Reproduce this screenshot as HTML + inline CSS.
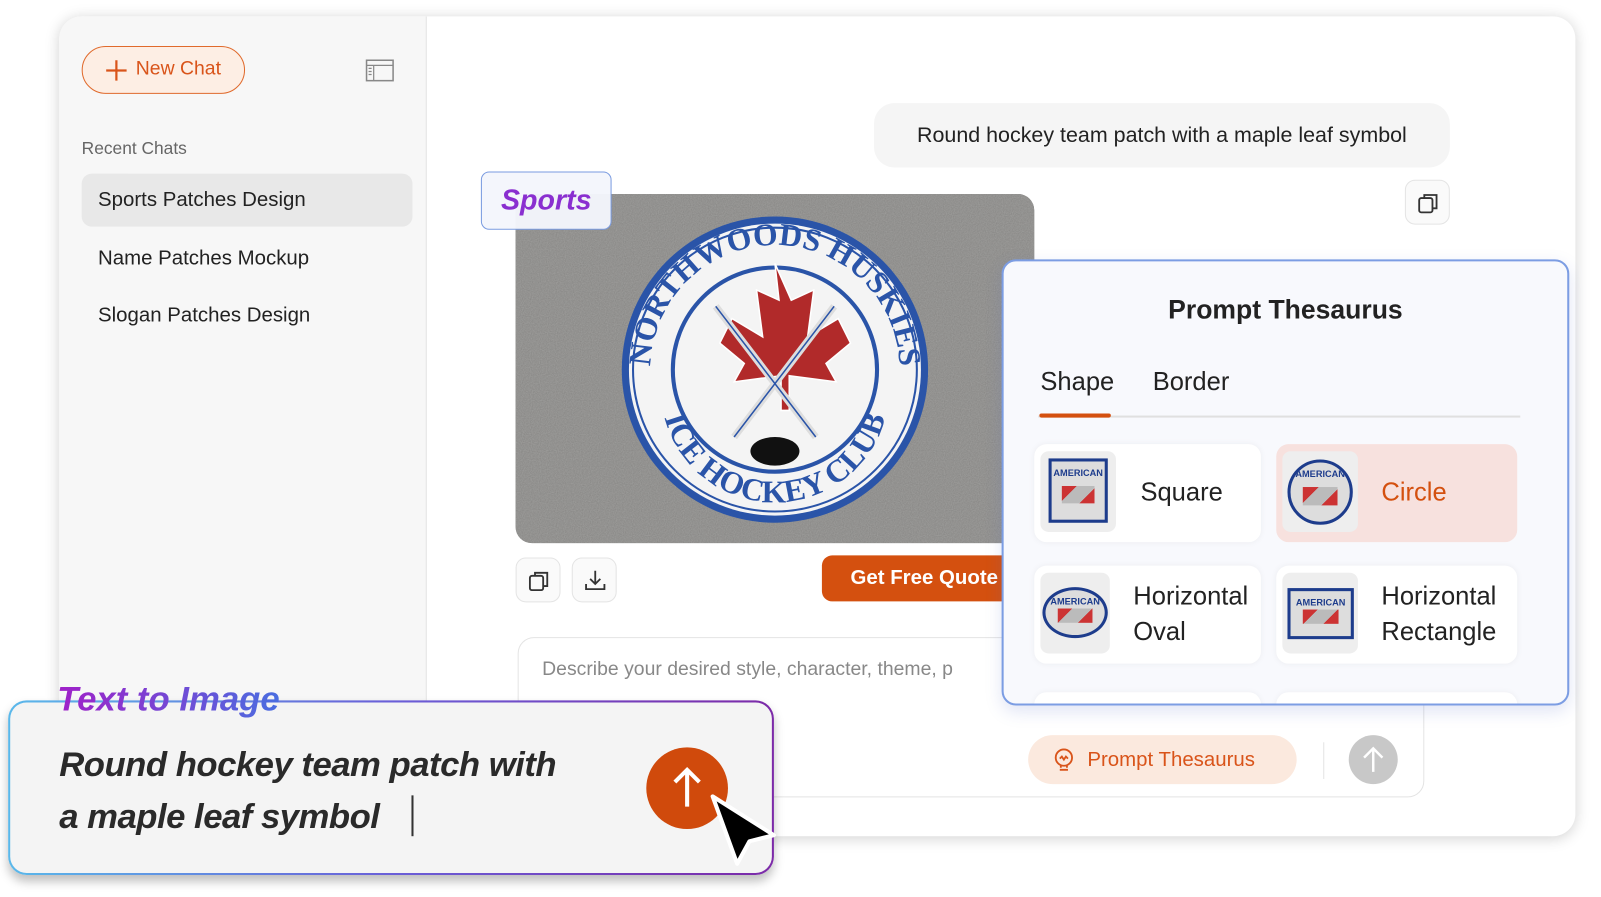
<!DOCTYPE html>
<html><head><meta charset="utf-8"><style>
*{box-sizing:border-box;margin:0;padding:0}
body{width:1601px;height:897px;background:#fff;position:relative;overflow:hidden;font-family:"Liberation Sans",sans-serif;color:#222}
#w{position:absolute;left:0;top:0;width:1568px;height:879px;transform:scale(1.021);transform-origin:0 0}
.abs{position:absolute}
.card{left:58px;top:16px;width:1485px;height:803px;border-radius:22px;background:#fff;box-shadow:0 2px 14px rgba(0,0,0,.18);overflow:hidden}
.side{left:0;top:0;width:360px;height:803px;background:#f7f7f7;border-right:1px solid #e4e4e4}
.nc{left:22px;top:29px;width:160px;height:47px;border:1.5px solid #e06a2c;border-radius:24px;background:#fdeee4;color:#d9541a;font-size:19px;line-height:44px;padding-left:52px}
.item{left:22px;width:324px;height:52px;border-radius:10px;font-size:20px;line-height:52px;padding-left:16px;color:#222}
.btn{width:44px;height:44px;border:1px solid #e4e4e4;border-radius:10px;background:#fafafa}
.th{border-radius:12px;background:#fff;box-shadow:0 0 6px rgba(0,0,0,.05)}
.thimg{border-radius:8px;background:#eeeeee}
.lab{font-size:25px;color:#222;line-height:35px}
.pt{background:#ddd;overflow:hidden}
.pt::before{content:"AMERICAN";position:absolute;left:0;right:0;top:6px;text-align:center;font-size:9px;font-weight:bold;color:#1d3c8c}
.pt::after{content:"";position:absolute;left:20%;right:20%;top:42%;height:30%;background:linear-gradient(135deg,#c33 0 30%,#bbb 30% 70%,#c33 70%)}
</style></head><body><div id="w">
<div class="abs card">
 <div class="abs side">
  <div class="abs nc"><svg class="abs" style="left:22px;top:12px" width="22" height="22" viewBox="0 0 22 22"><path d="M11 1v20M1 11h20" stroke="#d9541a" stroke-width="2.2"/></svg>New Chat</div>
  <svg class="abs" style="left:300px;top:42px" width="28" height="22" viewBox="0 0 28 22"><rect x="1" y="1" width="26" height="20" fill="none" stroke="#888" stroke-width="1.5"/><path d="M1 6h26M8 6v15M3 9h3M3 12h3M3 15h3" stroke="#888" stroke-width="1.2"/></svg>
  <div class="abs" style="left:22px;top:120px;font-size:17px;color:#666">Recent Chats</div>
  <div class="abs item" style="top:154px;background:#e8e8e8">Sports Patches Design</div>
  <div class="abs item" style="top:211px">Name Patches Mockup</div>
  <div class="abs item" style="top:267px">Slogan Patches Design</div>
 </div>
 <div class="abs" style="left:798px;top:85px;width:564px;height:63px;border-radius:20px;background:#f5f5f5;font-size:21px;line-height:63px;text-align:center;color:#222">Round hockey team patch with a maple leaf symbol</div>
 <div class="abs btn" style="left:1318px;top:160px"><svg class="abs" style="left:11px;top:11px" width="22" height="22" viewBox="0 0 22 22" fill="none" stroke="#333" stroke-width="1.8"><rect x="2" y="6" width="13" height="14" rx="2"/><path d="M7 6V3h12v13h-4"/></svg></div>
 <div class="abs" style="left:447px;top:174px;width:508px;height:342px;border-radius:16px;background:#7d7c7a;overflow:hidden">
  <svg width="508" height="342" viewBox="0 0 508 342">
   <defs><filter id="n"><feTurbulence type="fractalNoise" baseFrequency=".9" numOctaves="2"/><feColorMatrix values="0 0 0 0 .45 0 0 0 0 .45 0 0 0 0 .44 0 0 0 .6 0"/></filter>
   <path id="top" d="M132 172a122 122 0 0 1 244 0"/><path id="bot" d="M142 190a112 112 0 0 0 224 0"/></defs>
   <rect width="508" height="342" fill="#858482"/><rect width="508" height="342" filter="url(#n)"/>
   <circle cx="254" cy="172" r="150" fill="#2a54a8"/>
   <circle cx="254" cy="172" r="143" fill="#f4f4f4"/>
   <circle cx="254" cy="172" r="139" fill="none" stroke="#2a54a8" stroke-width="2"/>
   <circle cx="254" cy="172" r="100" fill="none" stroke="#2a54a8" stroke-width="4"/>
   <path d="M254 68l16 36 22-10-6 46 30-18 12 24-24 20 10 18-46-6v34h-8v-34l-46 6 10-18-24-20 12-24 30 18-6-46 22 10z" fill="#b12a2a" stroke="#fff" stroke-width="1.5"/>
   <path d="M196 110l98 128M312 110l-98 128" stroke="#ddd" stroke-width="7"/>
   <path d="M196 110l98 128M312 110l-98 128" stroke="#2a54a8" stroke-width="1.5"/>
   <ellipse cx="254" cy="252" rx="24" ry="14" fill="#111"/>
   <text font-family="Liberation Serif" font-weight="bold" font-size="31" fill="#2a54a8"><textPath href="#top" startOffset="50%" text-anchor="middle">NORTHWOODS HUSKIES</textPath></text>
   <text font-family="Liberation Serif" font-weight="bold" font-size="31" fill="#2a54a8"><textPath href="#bot" startOffset="50%" text-anchor="middle">ICE HOCKEY CLUB</textPath></text>
  </svg>
 </div>
 <div class="abs btn" style="left:447px;top:530px"><svg class="abs" style="left:11px;top:11px" width="22" height="22" viewBox="0 0 22 22" fill="none" stroke="#333" stroke-width="1.8"><rect x="2" y="6" width="13" height="14" rx="2"/><path d="M7 6V3h12v13h-4"/></svg></div>
 <div class="abs btn" style="left:502px;top:530px"><svg class="abs" style="left:11px;top:10px" width="22" height="22" viewBox="0 0 22 22" fill="none" stroke="#333" stroke-width="1.8"><path d="M11 2v13M6 10l5 5 5-5M2 15v5h18v-5"/></svg></div>
 <div class="abs" style="left:747px;top:528px;width:200px;height:45px;border-radius:10px;background:#d4500f;color:#fff;font-size:20px;font-weight:bold;line-height:45px;padding-left:28px">Get Free Quote</div>
 <div class="abs" style="left:449px;top:608px;width:888px;height:157px;border:1px solid #e4e4e4;border-radius:16px;background:#fff">
  <div class="abs" style="left:23px;top:20px;font-size:19px;color:#888">Describe your desired style, character, theme, p</div>
  <div class="abs" style="left:499px;top:95px;width:263px;height:48px;border-radius:24px;background:#fbe9de;color:#d9541a;font-size:20px;line-height:48px;padding-left:58px">Prompt Thesaurus<svg class="abs" style="left:24px;top:12px" width="22" height="26" viewBox="0 0 22 26" fill="none" stroke="#d9541a" stroke-width="1.8"><circle cx="11" cy="10" r="8"/><path d="M7 22h8M8 18v2M14 18v2M7 11l2-2 2 3 2-3 2 2"/></svg></div>
  <div class="abs" style="left:788px;top:102px;width:1px;height:36px;background:#e4e4e4"></div>
  <div class="abs" style="left:813px;top:95px;width:48px;height:48px;border-radius:50%;background:#c8c8c8"><svg class="abs" style="left:12px;top:10px" width="24" height="28" viewBox="0 0 24 28" fill="none" stroke="#fff" stroke-width="2.4"><path d="M12 26V3M3 12l9-9 9 9"/></svg></div>
 </div>
</div>
<div class="abs" style="left:471px;top:168px;width:128px;height:57px;border:1.5px solid #7a9be0;border-radius:8px;background:rgba(244,246,252,.96);font-size:28px;font-weight:bold;font-style:italic;line-height:54px;text-align:center;color:#8a2fd0">Sports</div>
<div class="abs" style="left:981px;top:254px;width:556px;height:437px;border:2px solid #7c9de3;border-radius:14px;background:#f8f9fd;box-shadow:0 6px 16px rgba(90,110,200,.18);overflow:hidden">
 <div class="abs" style="left:0;top:32px;width:100%;text-align:center;font-size:26px;font-weight:bold;color:#222">Prompt Thesaurus</div>
 <div class="abs" style="left:36px;top:104px;font-size:25px;color:#222">Shape</div>
 <div class="abs" style="left:146px;top:104px;font-size:25px;color:#222">Border</div>
 <div class="abs" style="left:34px;top:151px;width:472px;height:2px;background:#e0e0e0"></div>
 <div class="abs" style="left:35px;top:149px;width:70px;height:4px;background:#d4500f;border-radius:2px"></div>
 <div class="abs th" style="left:30px;top:179px;width:222px;height:96px"><div class="abs thimg" style="left:6px;top:7px;width:74px;height:79px"><div class="abs pt" style="left:8px;top:7px;width:58px;height:63px;border:3px solid #1d3c8c"></div></div><div class="abs lab" style="left:104px;top:30px">Square</div></div>
 <div class="abs" style="left:267px;top:179px;width:236px;height:96px;border-radius:12px;background:#f7e1de"><div class="abs thimg" style="left:6px;top:7px;width:74px;height:79px"><div class="abs pt" style="left:5px;top:8px;width:64px;height:64px;border:3px solid #1d3c8c;border-radius:50%"></div></div><div class="abs lab" style="left:103px;top:30px;color:#d4500f">Circle</div></div>
 <div class="abs th" style="left:30px;top:298px;width:222px;height:96px"><div class="abs thimg" style="left:6px;top:7px;width:68px;height:79px"><div class="abs pt" style="left:2px;top:14px;width:64px;height:50px;border:3px solid #1d3c8c;border-radius:50%"></div></div><div class="abs lab" style="left:97px;top:13px">Horizontal<br>Oval</div></div>
 <div class="abs th" style="left:267px;top:298px;width:236px;height:96px"><div class="abs thimg" style="left:6px;top:7px;width:74px;height:79px"><div class="abs pt" style="left:5px;top:15px;width:65px;height:50px;border:3px solid #1d3c8c"></div></div><div class="abs lab" style="left:103px;top:13px">Horizontal<br>Rectangle</div></div>
 <div class="abs th" style="left:30px;top:422px;width:222px;height:40px"></div>
 <div class="abs th" style="left:267px;top:422px;width:236px;height:40px"></div>
</div>
<div class="abs" style="left:8px;top:686px;width:750px;height:171px;border-radius:18px;padding:2px;background:linear-gradient(90deg,#5ab8ea,#6a5fd8,#7c2aa8);box-shadow:0 6px 10px rgba(0,0,0,.25)">
 <div style="width:100%;height:100%;border-radius:16px;background:#f4f4f4;position:relative">
  <div class="abs" style="left:48px;top:36px;font-size:34px;font-weight:bold;font-style:italic;line-height:51px;color:#2a2a2a;letter-spacing:-.5px">Round hockey team patch with<br>a maple leaf symbol</div>
  <div class="abs" style="left:393px;top:91px;width:2px;height:40px;background:#333"></div>
  <div class="abs" style="left:623px;top:44px;width:80px;height:80px;border-radius:50%;background:#d04a0c"><svg class="abs" style="left:24px;top:18px" width="32" height="42" viewBox="0 0 32 42" fill="none" stroke="#fff" stroke-width="4"><path d="M16 40V4M4 16L16 4l12 12"/></svg></div>
 </div>
</div>
<div class="abs" style="left:56px;top:666px;font-size:34px;font-weight:bold;font-style:italic;background:linear-gradient(90deg,#a020c8,#4a6ee0);-webkit-background-clip:text;color:transparent">Text to Image</div>
<svg class="abs" style="left:690px;top:774px" width="80" height="80" viewBox="0 0 80 80"><path d="M8 6L68 44 44 50 32 72z" fill="#000" stroke="#fff" stroke-width="4" stroke-linejoin="round"/></svg>
</div></body></html>
